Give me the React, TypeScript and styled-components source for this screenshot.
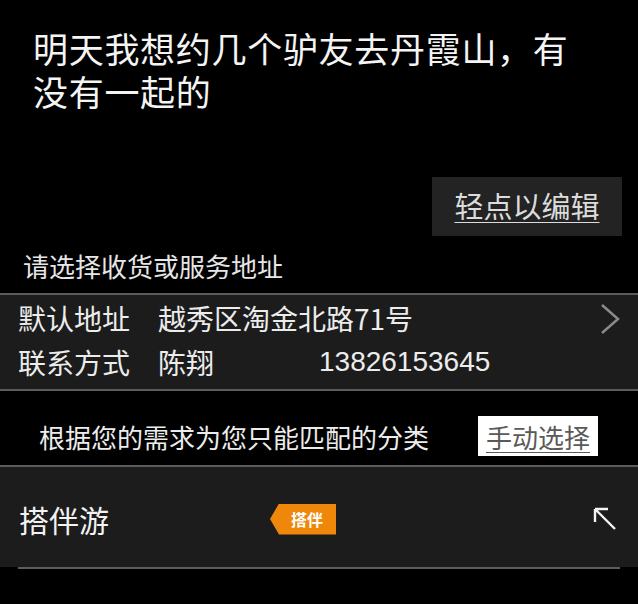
import * as React from 'react';
import styled, { createGlobalStyle } from 'styled-components';

/* ==================== [Style] ==================== */
const Global=createGlobalStyle`
    html, body {
        margin: 0;
        padding: 0;
        background: #000000;
    }
    body {
        font-family: "Noto Sans CJK SC", "Noto Sans", "Liberation Sans", sans-serif;
        color: #ffffff;
    }
`;

const Page=styled.div`
    width: 638px;
    height: 604px;
    background: #000000;
    display: flex;
    flex-direction: column;
    overflow: hidden;
`;

const Title=styled.div`
    padding: 26px 34px 0 33px;
    font-size: 35px;
    line-height: 43px;
    letter-spacing: 0.7px;
    color: #f4f4f4;
`;

const EditRow=styled.div`
    display: flex;
    justify-content: flex-end;
    padding: 0 16px 0 0;
    margin-top: 65px;
`;

const EditBtn=styled.button`
    width: 190px;
    height: 59px;
    border: 0;
    margin: 0;
    padding: 0 0 4px 0;
    background: #232323;
    color: #dcdcdc;
    font-family: inherit;
    font-size: 29px;
    text-decoration: underline;
    text-decoration-thickness: 1px;
    text-underline-offset: 4px;
`;

const Hint=styled.div`
    height: 57px;
    display: flex;
    align-items: center;
    padding: 2px 0 0 23px;
    box-sizing: border-box;
    font-size: 26px;
    color: #e6e6e6;
`;

const Divider=styled.div<{ $inset?: number }>`
    height: 2px;
    margin: 0 ${p=>p.$inset ?? 0}px;
    background: #5c5c5c;
    flex-shrink: 0;
`;

const Panel=styled.div<{ $height: number }>`
    height: ${p=>p.$height}px;
    background: #1c1c1c;
    display: flex;
    flex-direction: column;
`;

const AddressList=styled.div`
    padding: 1px 16px 0 18px;
`;

const InfoRow=styled.div`
    height: 44px;
    display: flex;
    align-items: center;
    font-size: 28px;
    color: #ececec;
`;

const Cell=styled.span<{ $width?: number }>`
    width: ${p=>p.$width ? `${p.$width}px` : 'auto'};
    flex-shrink: 0;
    white-space: nowrap;
`;

const Phone=styled.span`
    font-family: "Liberation Sans", "Noto Sans", sans-serif;
    font-size: 28px;
`;

const Chevron=styled.svg`
    margin-left: auto;
    margin-top: 2px;
`;

const MatchRow=styled.div`
    height: 74px;
    display: flex;
    align-items: center;
    padding: 16px 40px 0 39px;
    box-sizing: border-box;
    font-size: 26px;
    color: #ececec;
`;

const ManualBtn=styled.button`
    margin-left: auto;
    width: 120px;
    height: 40px;
    border: 0;
    padding: 0;
    background: #ffffff;
    color: #5a5a5a;
    font-family: inherit;
    font-size: 26px;
    text-decoration: underline;
    text-decoration-thickness: 1px;
    text-underline-offset: 4px;
`;

const CategoryRow=styled.div`
    flex: 1;
    display: flex;
    align-items: center;
    padding: 4px 20px 0 19px;
`;

const CategoryName=styled.span`
    width: 251px;
    font-size: 30px;
    color: #f2f2f2;
`;

const Tag=styled.span`
    width: 66px;
    height: 31px;
    display: flex;
    align-items: center;
    justify-content: center;
    padding-left: 8px;
    box-sizing: border-box;
    background: #ef870b;
    clip-path: polygon(9px 0, 100% 0, 100% 100%, 9px 100%, 0 50%);
    color: #ffffff;
    font-size: 16px;
    font-weight: 700;
`;

const Corner=styled.svg`
    margin-left: auto;
`;

/* ==================== [View] ==================== */
export default function App() {
    return (
        <>
            <Global />
            <Page>
                <Title>明天我想约几个驴友去丹霞山，有没有一起的</Title>
                <EditRow>
                    <EditBtn>轻点以编辑</EditBtn>
                </EditRow>
                <Hint>请选择收货或服务地址</Hint>
                <Divider />
                <Panel $height={94}>
                    <AddressList>
                        <InfoRow>
                            <Cell $width={140}>默认地址</Cell>
                            <Cell>越秀区淘金北路71号</Cell>
                            <Chevron width="24" height="32" viewBox="0 0 24 32">
                                <polyline points="4,2 20,16 4,30" fill="none" stroke="#8a8a8a" strokeWidth="2.5" />
                            </Chevron>
                        </InfoRow>
                        <InfoRow>
                            <Cell $width={140}>联系方式</Cell>
                            <Cell $width={161}>陈翔</Cell>
                            <Phone>13826153645</Phone>
                        </InfoRow>
                    </AddressList>
                </Panel>
                <Divider />
                <MatchRow>
                    根据您的需求为您只能匹配的分类
                    <ManualBtn>手动选择</ManualBtn>
                </MatchRow>
                <Divider />
                <Panel $height={100}>
                    <CategoryRow>
                        <CategoryName>搭伴游</CategoryName>
                        <Tag>搭伴</Tag>
                        <Corner width="26" height="26" viewBox="0 0 26 26">
                            <path d="M3 3 L23 23 M3 3 L16 3 M3 3 L3 16" fill="none" stroke="#f4f4f4" strokeWidth="2.4" />
                        </Corner>
                    </CategoryRow>
                </Panel>
                <Divider $inset={18} />
            </Page>
        </>
    );
}
